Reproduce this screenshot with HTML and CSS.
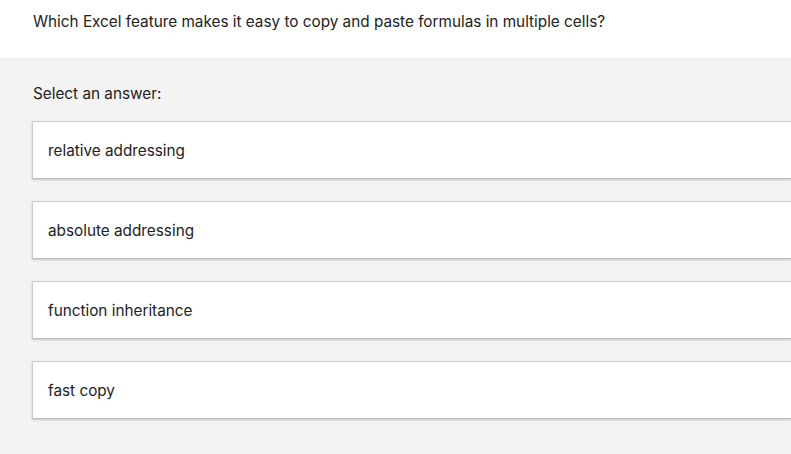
FILE: index.html
```html
<!DOCTYPE html>
<html lang="en">
<head>
  <meta charset="UTF-8">
  <meta name="viewport" content="width=device-width, initial-scale=1.0">
  <title>Quiz Question</title>
  <link rel="stylesheet" href="styles.css">
</head>
<body>

  <div class="question">
    <p>Which Excel feature makes it easy to copy and paste formulas in multiple cells?</p>
  </div>

  <div class="answers">
    <p class="prompt">Select an answer:</p>
    <div class="choice">relative addressing</div>
    <div class="choice">absolute addressing</div>
    <div class="choice">function inheritance</div>
    <div class="choice">fast copy</div>
  </div>

</body>
</html>
```

FILE: styles.css
```css
body {
  font-family: Inter, "Liberation Sans", Arial, sans-serif;
  font-size: 15.3px;
  line-height: 20px;
  color: #222;
  margin: 0;
  padding: 0;
  background-color: #f3f3f3;
  overflow: hidden;
}

p {
  margin: 0;
}

.question {
  background-color: #fff;
  height: 58px;
  padding: 12px 33px 0;
  box-sizing: border-box;
}

.answers {
  padding: 26px 0 13px 32px;
}

.prompt {
  margin: 0 0 17px 1px;
}

.choice {
  padding: 19px 15px 17px;
  margin-bottom: 22px;
  background-color: #fff;
  border: 1px solid #ccc;
  border-right: none;
  border-bottom-color: #bbb;
  box-shadow: 0 1px 2px rgba(0, 0, 0, 0.2);
}
```
